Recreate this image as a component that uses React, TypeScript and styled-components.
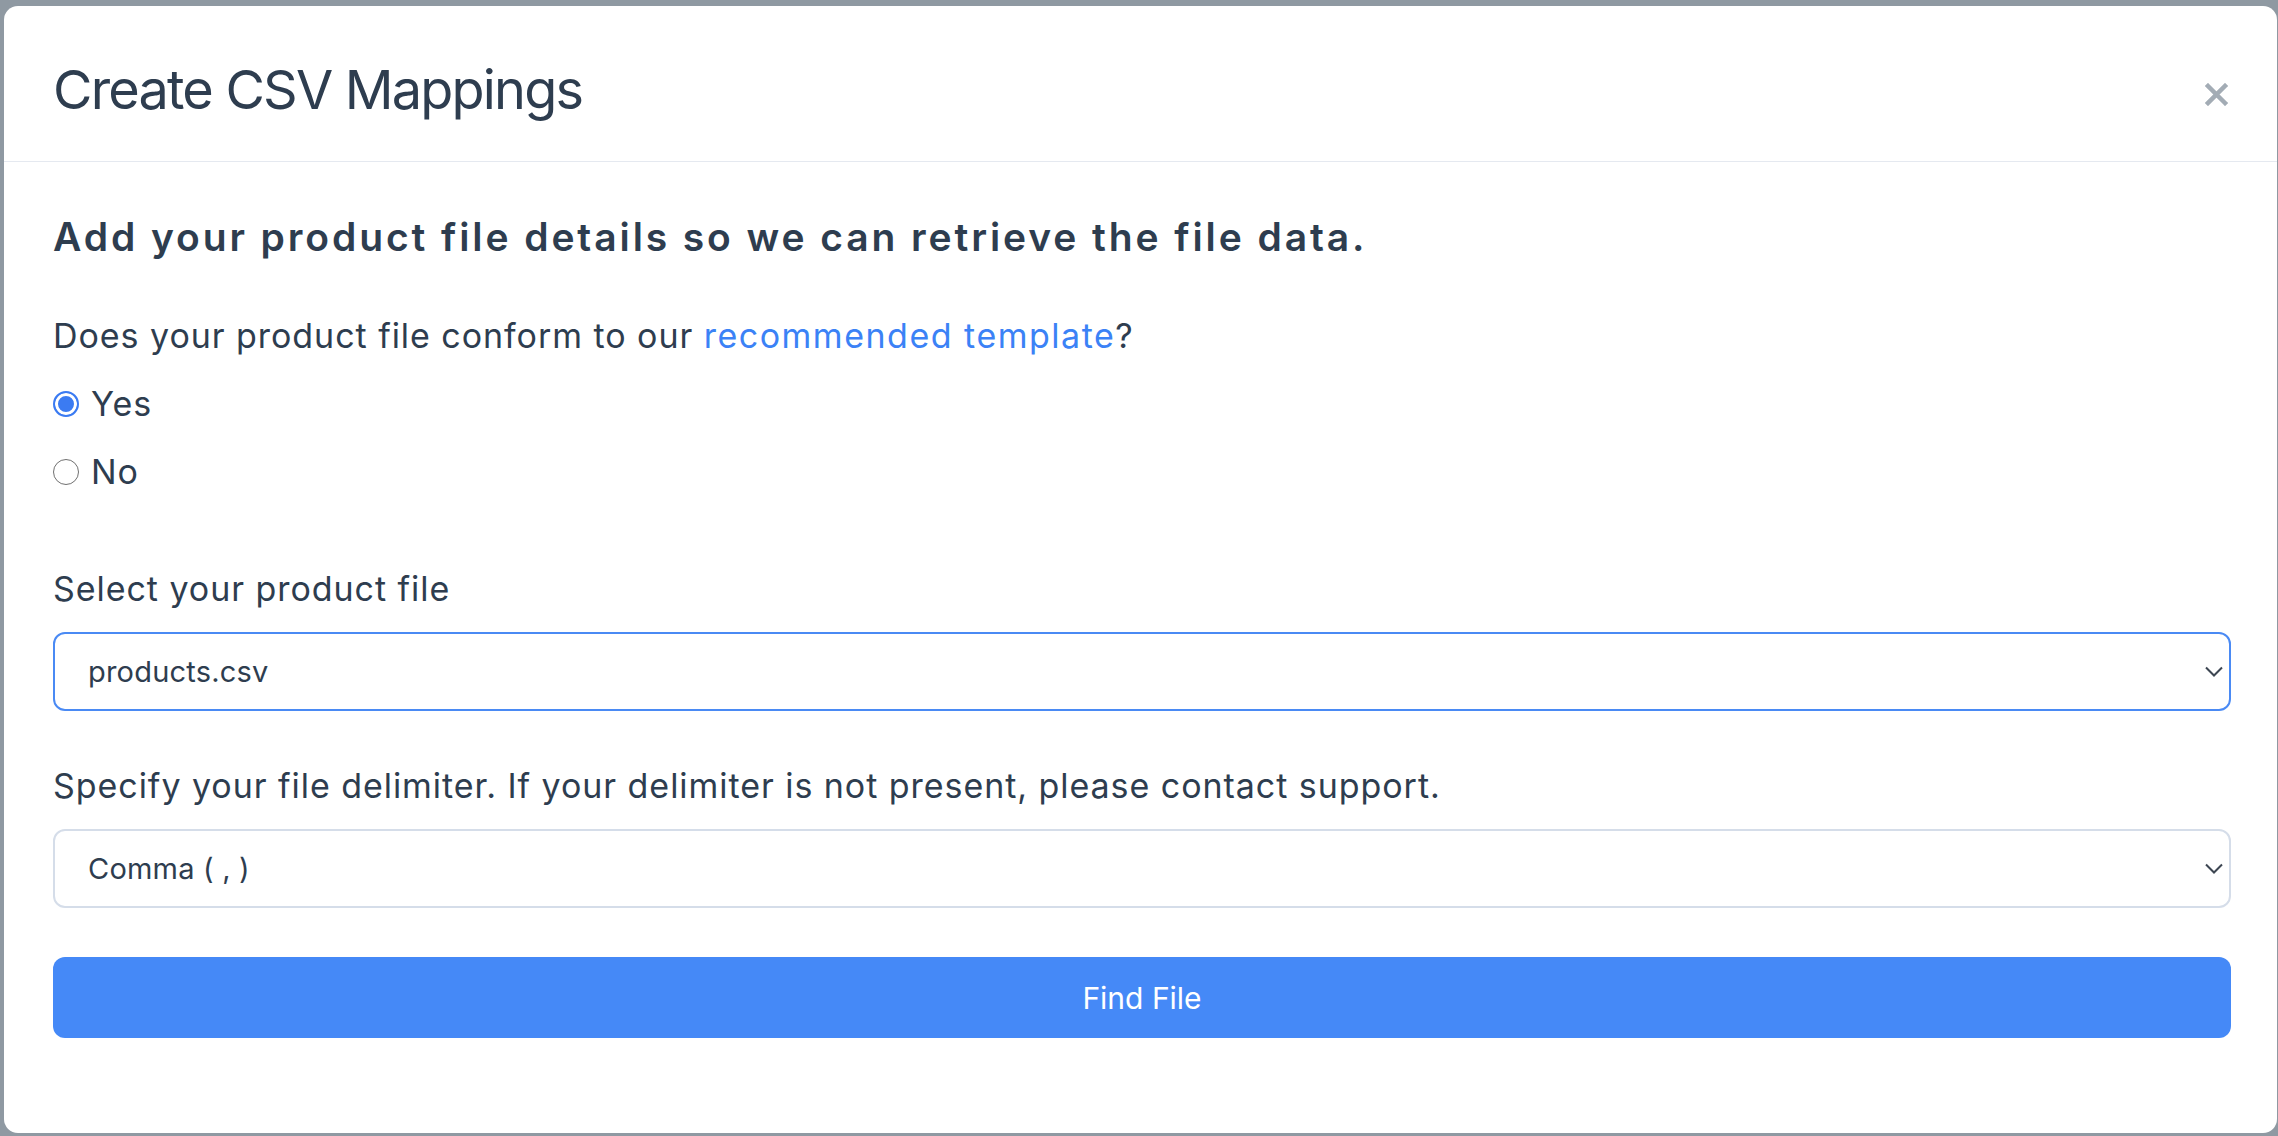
import React from "react";
import styled, { createGlobalStyle } from "styled-components";

const Global = createGlobalStyle`
  html, body { margin: 0; padding: 0; }
  body {
    background: #8f99a2;
    font-family: Inter, "Noto Sans", sans-serif;
    color: #2e3d4f;
    width: 2278px;
    height: 1136px;
    overflow: hidden;
  }
`;

const Page = styled.div`
  padding: 6px 1px 0 4px;
`;

const Modal = styled.div`
  background: #ffffff;
  border-radius: 14px;
  height: 1127px;
  box-sizing: border-box;
  overflow: hidden;
`;

const Header = styled.header`
  display: flex;
  align-items: center;
  justify-content: space-between;
  padding: 51px 49px 38px 49px;
  border-bottom: 1px solid #e5e9f0;
`;

const Title = styled.h1`
  margin: 0;
  font-family: Inter, sans-serif;
  font-weight: 400;
  font-size: 54px;
  line-height: 66px;
  letter-spacing: -1.8px;
  color: #2e3d4f;
`;

const Close = styled.button`
  border: 0;
  background: transparent;
  padding: 0;
  margin-top: 9px;
  width: 23px;
  height: 23px;
  display: flex;
  cursor: pointer;
`;

const Body = styled.div`
  padding: 52px 46px 0 49px;
  display: flex;
  flex-direction: column;
`;

const Heading = styled.h2`
  margin: 0;
  font-family: Inter, sans-serif;
  font-weight: 600;
  font-size: 39px;
  line-height: 46px;
  letter-spacing: 2.9px;
  color: #2e3d4f;
`;

const Text = styled.p<{ $top: number }>`
  margin: ${(p) => p.$top}px 0 0 0;
  font-size: 34px;
  line-height: 40px;
  letter-spacing: 0.95px;
  color: #2e3d4f;
`;

const Link = styled.a`
  color: #3b82f6;
  text-decoration: none;
  letter-spacing: 1.5px;
`;

const RadioRow = styled.label<{ $top: number }>`
  display: flex;
  align-items: center;
  gap: 12px;
  margin-top: ${(p) => p.$top}px;
  font-size: 34px;
  line-height: 40px;
  letter-spacing: 1px;
  color: #2e3d4f;
`;

const RadioDot = styled.span<{ $checked: boolean }>`
  width: 26px;
  height: 26px;
  box-sizing: border-box;
  border-radius: 50%;
  flex: none;
  border: ${(p) => (p.$checked ? "2px solid #3b7bf2" : "1.5px solid #707070")};
  background: ${(p) => (p.$checked ? "#3b7bf2" : "#fff")};
  box-shadow: ${(p) => (p.$checked ? "inset 0 0 0 3px #fff" : "none")};
`;

const SelectBox = styled.div<{ $focused: boolean; $top: number }>`
  margin-top: ${(p) => p.$top}px;
  height: 79px;
  box-sizing: border-box;
  border-radius: 12px;
  border: ${(p) => (p.$focused ? "2px solid #4a8af4" : "2px solid #d5dde9")};
  display: flex;
  align-items: center;
  justify-content: space-between;
  padding: 0 6px 0 33px;
  font-size: 29px;
  letter-spacing: 0.2px;
  color: #2e3d4f;
`;

const Chevron = styled.svg`
  width: 18px;
  height: 11px;
  flex: none;
`;

const Button = styled.button`
  margin-top: 49px;
  height: 81px;
  border: 0;
  border-radius: 12px;
  background: #4589f7;
  color: #ffffff;
  font-family: Inter, sans-serif;
  font-size: 30px;
  font-weight: 400;
  cursor: pointer;
`;

const ChevronIcon = () => (
  <Chevron viewBox="0 0 18 11">
    <path d="M1 1.5 L9 9.5 L17 1.5" fill="none" stroke="#3d4652" strokeWidth="2" />
  </Chevron>
);

export default function App() {
  return (
    <>
      <Global />
      <Page>
        <Modal>
          <Header>
            <Title>Create CSV Mappings</Title>
            <Close aria-label="Close">
              <svg viewBox="0 0 23 23" width="23" height="23">
                <path d="M3 3 L20 20 M20 3 L3 20" stroke="#a3acb5" strokeWidth="4.5" strokeLinecap="square" />
              </svg>
            </Close>
          </Header>
          <Body>
            <Heading>Add your product file details so we can retrieve the file data.</Heading>
            <Text $top={56}>
              Does your product file conform to our <Link href="#">recommended template</Link>?
            </Text>
            <RadioRow $top={28}>
              <RadioDot $checked={true} />
              Yes
            </RadioRow>
            <RadioRow $top={28}>
              <RadioDot $checked={false} />
              No
            </RadioRow>
            <Text $top={77}>Select your product file</Text>
            <SelectBox $focused={true} $top={23}>
              <span>products.csv</span>
              <ChevronIcon />
            </SelectBox>
            <Text $top={55}>Specify your file delimiter. If your delimiter is not present, please contact support.</Text>
            <SelectBox $focused={false} $top={23}>
              <span>Comma ( , )</span>
              <ChevronIcon />
            </SelectBox>
            <Button>Find File</Button>
          </Body>
        </Modal>
      </Page>
    </>
  );
}
